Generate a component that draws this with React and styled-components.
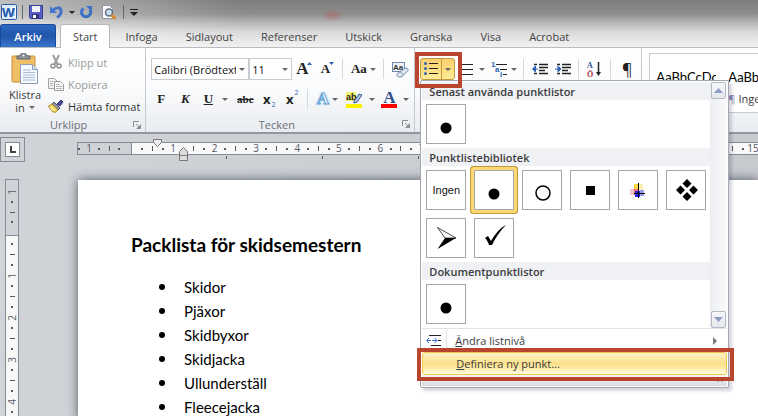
import React from "react";
import styled, { createGlobalStyle, css } from "styled-components";

const GlobalStyle = createGlobalStyle`
  * {
    box-sizing: border-box;
  }
  body {
    margin: 0;
    overflow: hidden;
    background: #c9cdd2;
    color: #3b3b3b;
    font-family: "Open Sans", "Noto Sans", sans-serif;
    font-size: 11px;
  }
  button,
  select {
    font: inherit;
    color: inherit;
  }
  svg {
    display: block;
    flex: none;
  }
`;

const tabs = ["Infoga", "Sidlayout", "Referenser", "Utskick", "Granska", "Visa", "Acrobat"];
const packlista = ["Skidor", "Pjäxor", "Skidbyxor", "Skidjacka", "Ullunderställ", "Fleecejacka"];

const Caret = ({ color = "#666" }) => (
  <svg width="6" height="3" viewBox="0 0 6 3">
    <path d="M0 0h6L3 3z" fill={color} />
  </svg>
);

const WordIcon = () => (
  <svg width="16" height="16" viewBox="0 0 16 16">
    <rect x="0.500" y="0.500" width="15" height="15" rx="1" fill="#dceafa" stroke="#2a5aa8" />
    <path d="M10 3h5v10h-5z" fill="#fff" />
    <path d="M11 5h3M11 7h3M11 9h3M11 11h3" stroke="#5a86c6" />
    <text x="1" y="13" fontSize="13" fontWeight="700" fontFamily="Open Sans" fill="#1c58ad">
      W
    </text>
  </svg>
);

const SaveIcon = () => (
  <svg width="14" height="14" viewBox="0 0 14 14">
    <path d="M0.500 0.500h13v13h-12l-1-1z" fill="#5a5cc4" stroke="#3c3d96" />
    <path d="M3 1h8v6H3z" fill="#eef2fb" />
    <path d="M3 9h7v5H3z" fill="#31327f" />
    <path d="M4 10h3v3H4z" fill="#fff" />
  </svg>
);

const UndoIcon = () => (
  <svg width="13" height="14" viewBox="0 0 13 14">
    <path d="M3 5.500C5 2.500 10.500 1.500 11 5.500c.3 3-1.500 5.500-4 7" fill="none" stroke="#3f74c8" strokeWidth="3" />
    <path d="M0 1v7h7z" fill="#3f78cf" />
  </svg>
);

const RedoIcon = () => (
  <svg width="13" height="13" viewBox="0 0 13 13">
    <path d="M3.500 2.500A4.500 4.500 0 1 0 10 4" fill="none" stroke="#3a70c6" strokeWidth="3" />
    <path d="M6 0h6v6z" fill="#3a70c6" />
  </svg>
);

const PreviewIcon = () => (
  <svg width="16" height="15" viewBox="0 0 16 15">
    <path d="M1.500 0.500h7l3 3v10h-10z" fill="#fff" stroke="#8b96a8" />
    <circle cx="8" cy="7.500" r="3.500" fill="#c9dff2" stroke="#5d6c80" strokeWidth="1.500" />
    <path d="M10.500 10l4 4" stroke="#d98a2b" strokeWidth="3" />
  </svg>
);

const PasteIcon = () => (
  <svg width="28" height="31" viewBox="0 0 28 31">
    <rect x="1" y="3" width="23" height="26" rx="1" fill="#efbe66" stroke="#c98f3a" />
    <path d="M6 6V3h3c0-4 7-4 7 0h3v3z" fill="#8c9196" stroke="#62676c" />
    <circle cx="12.500" cy="2.500" r="1" fill="#fff" />
    <path d="M9.500 11.500h12l5 5v14h-17z" fill="#f6f9fd" stroke="#8c9db5" />
    <path d="M21.500 11.500v5h5" fill="#d5e0ee" stroke="#8c9db5" />
    <path d="M12 17h8M12 19.500h12M12 22h12M12 24.500h12M12 27h12" stroke="#a9b9d0" />
  </svg>
);

const CutIcon = () => (
  <svg width="16" height="16" viewBox="0 0 16 16">
    <path d="M5 1l4.500 9M11 1L6.500 10" stroke="#9a9a9a" strokeWidth="2" />
    <circle cx="5" cy="12" r="2" fill="none" stroke="#8f8f8f" strokeWidth="1.500" />
    <circle cx="11" cy="12" r="2" fill="none" stroke="#8f8f8f" strokeWidth="1.500" />
  </svg>
);

const CopyIcon = () => (
  <svg width="16" height="14" viewBox="0 0 16 14">
    <path d="M0.500 1.500h6l3 3v7h-9z" fill="#f3f3f3" stroke="#a5a5a5" />
    <path d="M6.500 4.500h6l3 3v6h-9z" fill="#fafafa" stroke="#9a9a9a" />
    <path d="M2 4.500h3M2 6.500h3M2 8.500h3M8 7.500h4M8 9.500h6M8 11.500h6" stroke="#b5b5b5" />
  </svg>
);

const BrushIcon = () => (
  <svg width="16" height="14" viewBox="0 0 16 14">
    <path d="M9 5l4-4 2 2-3 4z" fill="#4c4f9e" stroke="#34376f" />
    <path d="M6 3l6 6-2 2-6-6z" fill="#8c93a8" stroke="#555b6e" />
    <path d="M4 5l6 6-3 2.500C4 13 2 10 0.500 7z" fill="#f5d65a" stroke="#a8862a" />
    <path d="M3 7l4 5M2 8l3 4" stroke="#fff3b0" />
  </svg>
);

const ClearIcon = () => (
  <svg width="17" height="17" viewBox="0 0 17 17">
    <rect x="0.500" y="1.500" width="12" height="9" fill="#f2f6fb" stroke="#6d8bb3" />
    <text x="1" y="9" fontSize="8" fontWeight="700" fontFamily="Liberation Sans" fill="#333">
      Aa
    </text>
    <path d="M5.500 12.500l7-5c2-1 4 0 3.500 2l-6.500 6.500h-3c-2-1-2-2-1-3.500z" fill="#dfe9f5" stroke="#6d86a8" />
    <path d="M8 11l4 3" stroke="#8ba3c2" />
  </svg>
);

const Bullets = () => (
  <svg width="14" height="14" viewBox="0 0 14 14">
    <path d="M5 1.500h9M5 6.500h9M5 11.500h9" stroke="#222" />
    <g fill="#2e62b5">
      <circle cx="1.500" cy="1.500" r="1.500" />
      <circle cx="1.500" cy="6.500" r="1.500" />
      <circle cx="1.500" cy="11.500" r="1.500" />
    </g>
  </svg>
);

const Numbering = () => (
  <svg width="14" height="14" viewBox="0 0 14 14">
    <path d="M3 2.500h11M3 7.500h11M3 12.500h11" stroke="#222" />
    <path d="M0.500 1v3M0.500 6v3M0.500 11v3" stroke="#2e62b5" />
  </svg>
);

const MultiLevel = () => (
  <svg width="17" height="17" viewBox="0 0 17 17">
    <path d="M5 3.500h11M9 8.500h7M12 13.500h4" stroke="#222" />
    <g fill="#2e62b5" fontSize="8" fontWeight="700" fontFamily="Liberation Sans">
      <text x="0" y="6">1</text>
      <text x="4" y="11">a</text>
      <text x="9" y="16">i</text>
    </g>
  </svg>
);

const IndentIcon = ({ right }) => (
  <svg width="16" height="13" viewBox="0 0 16 13">
    <path d="M2 1.500h3M7 1.500h9M7 4.500h9M7 7.500h6M2 10.500h3M7 10.500h9" stroke="#222" strokeWidth="1.500" />
    <path d={right ? "M0 6h3M3 3l3 3-3 3z" : "M3 6h3M3.500 3l-3 3 3 3z"} fill="#2e62b5" stroke="#2e62b5" />
  </svg>
);

const SortIcon = () => (
  <svg width="15" height="18" viewBox="0 0 15 18">
    <text x="0" y="8" fontSize="8" fontWeight="700" fontFamily="Liberation Serif" fill="#2e4f92">
      A
    </text>
    <text x="0" y="17" fontSize="8" fontWeight="700" fontFamily="Liberation Serif" fill="#9b2f35">
      Ö
    </text>
    <path d="M11.500 2v12" stroke="#222" strokeWidth="1.500" />
    <path d="M9 12h5l-2.500 4z" fill="#222" />
  </svg>
);

const LauncherIcon = () => (
  <svg width="8" height="8" viewBox="0 0 8 8">
    <path d="M0.500 6V0.500H6" fill="none" stroke="#8b9097" />
    <path d="M3 3l3 3" stroke="#8b9097" />
    <path d="M8 3v5H3z" fill="#8b9097" />
  </svg>
);

const ListLevelIcon = () => (
  <svg width="16" height="12" viewBox="0 0 16 12">
    <path d="M3 0.500h12M12 5.500h3M5 10.500h10" stroke="#222" />
    <path d="M1 5.500h4M6 5.500h5" stroke="#3d74d0" />
    <path d="M3 3L0.500 5.500 3 8M8.500 3L11 5.500 8.500 8" fill="none" stroke="#3d74d0" />
  </svg>
);

const Highlighter = () => (
  <svg width="17" height="17" viewBox="0 0 17 17">
    <path d="M0 1h10v9H0z" fill="#f4f06a" />
    <text x="0" y="9" fontSize="9" fontWeight="700" fontFamily="Liberation Sans" fill="#222">
      ab
    </text>
    <path d="M8 10l5-7 3 1-5 7-3 1z" fill="#a9c2e2" stroke="#3f5f8f" />
    <path d="M0 13h16v4H0z" fill="#fff200" />
  </svg>
);

const bulletGlyphs = {
  dot: <circle cx="19" cy="23" r="5.500" fill="#000" />,
  circle: <circle cx="20" cy="22" r="7" fill="none" stroke="#000" strokeWidth="1.500" />,
  square: <path d="M15 15h9v9h-9z" fill="#000" />,
  cross: (
    <>
      <path d="M15 13h5v6h-5z" fill="#f8d648" />
      <path d="M20 13h4v6h-4z" fill="#fcefb4" />
      <path d="M11 18h4v6h-4z" fill="#fac4c4" />
      <path d="M15 18h5v6h-5z" fill="#f56a6a" />
      <path d="M16 20h5v6h-5z" fill="#2222f0" />
      <path d="M21 19h4v6h-4z" fill="#9d9df8" />
      <path d="M19.500 12v15M15 22.500h11" stroke="#000" />
    </>
  ),
  diamonds: (
    <path
      d="M20 8l4.500 4.500L20 17l-4.500-4.500zM13.500 14.500L18 19l-4.500 4.500L9 19zM26.500 14.500L31 19l-4.500 4.500L22 19zM20 21l4.500 4.500L20 30l-4.500-4.500z"
      fill="#000"
    />
  ),
  arrow: (
    <>
      <path d="M10.500 8.500L29 19H18z" fill="#fff" stroke="#000" strokeWidth="0.700" />
      <path d="M18 19h11L10.500 30z" fill="#000" />
    </>
  ),
  check: <path d="M10 19l3-2 3 5C20 15 25 9 31 6c-6 6-10 12-14 20h-3c-1-3-2-5-4-7z" fill="#000" />,
};

const Glyph = ({ name }) => (
  <svg width="38" height="38" viewBox="0 0 38 38" role="img" aria-label={name}>
    {bulletGlyphs[name]}
  </svg>
);

const App = () => {
  const mapUnits = (count) =>
    Array.from({ length: count }, (_, index) => (
      <RulerUnit key={index}>
        <Dot />
        <Tick />
        <Dot />
        <RulerNumber>{index + 1}</RulerNumber>
      </RulerUnit>
    ));

  const mapVerticalUnits = (count) =>
    Array.from({ length: count }, (_, index) => (
      <VerticalUnit key={index}>
        <Dot />
        <Tick $vertical />
        <Dot />
        <VerticalNumber>{index + 1}</VerticalNumber>
      </VerticalUnit>
    ));

  return (
    <Window>
      <GlobalStyle />
      <Header>
        <QuickAccess>
          <WordIcon />
          <QuickLine />
          <QuickButton aria-label="Spara">
            <SaveIcon />
          </QuickButton>
          <QuickButton aria-label="Ångra">
            <UndoIcon />
            <Caret color="#222" />
          </QuickButton>
          <QuickButton aria-label="Gör om">
            <RedoIcon />
          </QuickButton>
          <QuickButton aria-label="Förhandsgranska">
            <PreviewIcon />
          </QuickButton>
          <QuickLine />
          <QuickButton aria-label="Anpassa">
            <svg width="8" height="7" viewBox="0 0 8 7">
              <path d="M0 0.500h8" stroke="#222" />
              <path d="M0 3h8L4 7z" fill="#222" />
            </svg>
          </QuickButton>
        </QuickAccess>
        <TabList>
          <FileTab>Arkiv</FileTab>
          <Tab $active>Start</Tab>
          {tabs.map((tab) => (
            <Tab key={tab}>{tab}</Tab>
          ))}
        </TabList>
      </Header>

      <Ribbon>
        <Group>
          <ClipboardBody>
            <PasteButton>
              <PasteIcon />
              <PasteText>
                Klistra
                <PasteLine>
                  in <Caret />
                </PasteLine>
              </PasteText>
            </PasteButton>
            <ClipboardList>
              <ClipboardButton disabled>
                <CutIcon />
                Klipp ut
              </ClipboardButton>
              <ClipboardButton disabled>
                <CopyIcon />
                Kopiera
              </ClipboardButton>
              <ClipboardButton>
                <BrushIcon />
                Hämta format
              </ClipboardButton>
            </ClipboardList>
          </ClipboardBody>
          <GroupFooter>
            <GroupName>Urklipp</GroupName>
            <LauncherIcon />
          </GroupFooter>
        </Group>

        <Group>
          <GroupBody>
            <ToolRow>
              <Combo $width={98}>
                <select aria-label="Teckensnitt">
                  <option>Calibri (Brödtext)</option>
                </select>
                <Caret />
              </Combo>
              <Combo $width={43}>
                <select aria-label="Teckenstorlek">
                  <option>11</option>
                </select>
                <Caret />
              </Combo>
              <Tool $width={24} $size={17} $serif aria-label="Öka teckenstorlek">
                A
                <SizeMark>
                  <path d="M0 3h5L2.500 0z" fill="#2e62b5" />
                </SizeMark>
              </Tool>
              <Tool $width={22} $size={13} $serif aria-label="Minska teckenstorlek">
                A
                <SizeMark>
                  <path d="M0 0h5L2.500 3z" fill="#2e62b5" />
                </SizeMark>
              </Tool>
              <Divider />
              <Tool $width={32} $size={13} $serif>
                Aa
                <Caret />
              </Tool>
              <Divider />
              <Tool $width={24} aria-label="Radera formatering">
                <ClearIcon />
              </Tool>
            </ToolRow>
            <ToolRow>
              <Tool $width={20} $size={13} $serif>
                F
              </Tool>
              <Tool $width={28} $size={13} $serif $italic>
                K
              </Tool>
              <Tool $width={18} $size={13} $serif>
                <u>U</u>
              </Tool>
              <Tool $width={16} aria-label="Understrykning">
                <Caret />
              </Tool>
              <Tool $width={24} $size={11} $serif>
                <s>abc</s>
              </Tool>
              <Tool $width={24} $gap={1} $size={13}>
                <b>x</b>
                <Sub>2</Sub>
              </Tool>
              <Tool $width={22} $gap={1} $size={13}>
                <b>x</b>
                <Sup>2</Sup>
              </Tool>
              <Divider />
              <Tool $width={30} $size={17} $serif>
                <GlowLetter>A</GlowLetter>
                <Caret />
              </Tool>
              <Tool $width={36} $gap={6} aria-label="Överstrykningsfärg">
                <Highlighter />
                <Caret />
              </Tool>
              <Tool $width={34} $gap={6} $size={17} $serif>
                <ColorLetter>A</ColorLetter>
                <Caret />
              </Tool>
            </ToolRow>
          </GroupBody>
          <GroupFooter>
            <GroupName>Tecken</GroupName>
            <LauncherIcon />
          </GroupFooter>
        </Group>

        <Group>
          <GroupBody>
            <ToolRow>
              <BulletPicker>
                <BulletButton aria-label="Punktlista">
                  <Bullets />
                </BulletButton>
                <BulletArrow aria-label="Välj punkt">
                  <Caret />
                </BulletArrow>
                <BulletMenu />
                <ButtonFrame />
              </BulletPicker>
              <Tool $width={34} $gap={6} aria-label="Numrering">
                <Numbering />
                <Caret />
              </Tool>
              <Tool $width={30} aria-label="Lista med flera nivåer">
                <MultiLevel />
                <Caret />
              </Tool>
              <Divider />
              <Tool $width={24} aria-label="Minska indrag">
                <IndentIcon />
              </Tool>
              <Tool $width={22} aria-label="Öka indrag">
                <IndentIcon right />
              </Tool>
              <Divider />
              <Tool $width={23} aria-label="Sortera">
                <SortIcon />
              </Tool>
              <Divider />
              <Tool $width={24} $size={16} aria-label="Visa alla">
                ¶
              </Tool>
            </ToolRow>
          </GroupBody>
        </Group>

        <StylesGroup>
          <StyleGallery>
            <StyleItem>
              <StyleSample>AaBbCcDc</StyleSample>
              <StyleName>¶ Normal</StyleName>
            </StyleItem>
            <StyleItem>
              <StyleSample>AaBbCcDc</StyleSample>
              <StyleName>
                <Pilcrow>¶</Pilcrow> Ingen avst...
              </StyleName>
            </StyleItem>
          </StyleGallery>
        </StylesGroup>
      </Ribbon>

      <Workspace>
        <SideColumn>
          <TabSelector aria-label="Tabb">
            <TabSelectorInner>
              <svg width="6" height="7" viewBox="0 0 6 7">
                <path d="M1 0v6h5" fill="none" stroke="#444" strokeWidth="2" />
              </svg>
            </TabSelectorInner>
          </TabSelector>
          <VerticalRuler>
            <VerticalMargin>
              <VerticalNumber>1</VerticalNumber>
              <Dot />
              <Tick $vertical />
              <Dot />
            </VerticalMargin>
            <VerticalScale>{mapVerticalUnits(5)}</VerticalScale>
          </VerticalRuler>
        </SideColumn>
        <DocumentColumn>
          <Ruler>
            <RulerMargin>
              <Dot />
              <RulerNumber>1</RulerNumber>
              <Dot />
              <Tick />
              <Dot />
            </RulerMargin>
            <RulerScale>{mapUnits(15)}</RulerScale>
            <IndentMarkers width="36" height="22" viewBox="0 0 36 22">
              <path d="M0.500 0.500h8v3l-4 4-4-4z" fill="#ececec" stroke="#777" />
              <path d="M26.500 12.500l4-4 4 4v9h-8z" fill="#dcdcdc" stroke="#777" />
              <path d="M26 16.500h9" stroke="#777" />
            </IndentMarkers>
          </Ruler>
          <TabStops>
            {[1, 2, 3, 4, 5, 6].map((stop) => (
              <TabStop key={stop} />
            ))}
          </TabStops>
          <Page>
            <Title>Packlista för skidsemestern</Title>
            <List>
              {packlista.map((item) => (
                <ListItem key={item}>{item}</ListItem>
              ))}
            </List>
          </Page>
        </DocumentColumn>
      </Workspace>
    </Window>
  );
};

const BulletMenu = () => (
  <Menu>
    <Gallery>
      <GalleryList>
        <GalleryHeader>Senast använda punktlistor</GalleryHeader>
        <GalleryGrid>
          <GalleryItem>
            <Glyph name="dot" />
          </GalleryItem>
        </GalleryGrid>
        <GalleryHeader>Punktlistebibliotek</GalleryHeader>
        <GalleryGrid>
          <GalleryItem>Ingen</GalleryItem>
          <GalleryItem $selected>
            <Glyph name="dot" />
          </GalleryItem>
          {["circle", "square", "cross", "diamonds", "arrow", "check"].map((name) => (
            <GalleryItem key={name}>
              <Glyph name={name} />
            </GalleryItem>
          ))}
        </GalleryGrid>
        <GalleryHeader>Dokumentpunktlistor</GalleryHeader>
        <GalleryGrid>
          <GalleryItem>
            <Glyph name="dot" />
          </GalleryItem>
        </GalleryGrid>
      </GalleryList>
      <ScrollBar>
        <ScrollButton aria-label="Uppåt">
          <svg width="9" height="5" viewBox="0 0 9 5">
            <path d="M0 5h9L4.500 0z" fill="#8f9cc4" />
          </svg>
        </ScrollButton>
        <ScrollButton aria-label="Nedåt">
          <svg width="9" height="5" viewBox="0 0 9 5">
            <path d="M0 0h9L4.500 5z" fill="#8f9cc4" />
          </svg>
        </ScrollButton>
      </ScrollBar>
    </Gallery>
    <MenuItem>
      <MenuIcon>
        <ListLevelIcon />
      </MenuIcon>
      <MenuText>
        <u>Ä</u>ndra listnivå
      </MenuText>
      <svg width="4" height="8" viewBox="0 0 4 8">
        <path d="M0 0v8l4-4z" fill="#777" />
      </svg>
    </MenuItem>
    <MenuItem $hot>
      <MenuIcon $hot />
      <MenuText>
        <u>D</u>efiniera ny punkt...
      </MenuText>
    </MenuItem>
    <MenuGrip>
      <svg width="7" height="3" viewBox="0 0 7 3">
        <path d="M0 0h2v2H0zM4 0h2v2H4z" fill="#b3b7bd" />
      </svg>
    </MenuGrip>
  </Menu>
);

const Window = styled.div`
  height: 100vh;
  display: flex;
  flex-direction: column;
  overflow: hidden;
`;

const Header = styled.header`
  display: flex;
  flex-direction: column;
  background: radial-gradient(ellipse 12px 7px at 333px 15px, rgba(190, 80, 80, 0.4), transparent),
    linear-gradient(to right, rgba(255, 255, 255, 0.5), transparent 240px),
    linear-gradient(#7c7c7c, #8e8e8e 14px, #b4b4b4 22px, #dadada 32px, #f2f2f2 47px);
`;

const QuickAccess = styled.div`
  height: 24px;
  padding: 0 1px;
  display: flex;
  align-items: center;
  gap: 3px;
`;

const QuickLine = styled.span`
  width: 1px;
  height: 14px;
  margin: 0 2px;
  background: #666;
`;

const plainButton = css`
  border: 0;
  padding: 0;
  background: none;
  display: flex;
  align-items: center;
`;

const QuickButton = styled.button`
  ${plainButton}
  min-width: 16px;
  gap: 6px;
  margin: 0 1px;
`;

const TabList = styled.nav`
  display: flex;
  height: 24px;
  border-bottom: 1px solid #b9bcc0;
`;

const Tab = styled.button`
  ${plainButton}
  height: 24px;
  padding: 0 14px;
  color: #444;
  ${({ $active }) =>
    $active &&
    css`
      padding: 0 12px;
      margin-right: 1px;
      background: #fff;
      border: 1px solid #b4b7bb;
      border-bottom: 0;
      border-radius: 3px 3px 0 0;
    `}
`;

const FileTab = styled.button`
  ${plainButton}
  justify-content: center;
  width: 56px;
  height: 23px;
  margin-right: 4px;
  border: 1px solid #1d4a97;
  border-bottom: 0;
  border-radius: 3px 3px 0 0;
  background: linear-gradient(#2f68c0, #1f55ab 50%, #3a76cc);
  color: #fff;
  font-weight: 600;
`;

const Ribbon = styled.div`
  display: flex;
  position: relative;
  z-index: 1;
  height: 86px;
  background: linear-gradient(#fff, #fafbfc 50%, #e8ebf0);
  border-bottom: 2px solid #92979e;
`;

const Group = styled.section`
  display: flex;
  flex-direction: column;
  justify-content: space-between;
  border-right: 1px solid #c6cad0;
  margin-right: 1px;
`;

const GroupFooter = styled.div`
  display: flex;
  align-items: center;
  height: 16px;
  padding: 0 4px;
`;

const GroupName = styled.span`
  flex: 1;
  text-align: center;
  color: #6a6f77;
`;

const GroupBody = styled.div`
  display: flex;
  flex-direction: column;
  gap: 8px;
  padding: 10px 2px 0 4px;
`;

const ClipboardBody = styled.div`
  display: flex;
  padding: 3px 3px 0 4px;
`;

const PasteButton = styled.button`
  ${plainButton}
  flex-direction: column;
  width: 42px;
  padding-top: 2px;
  gap: 4px;
`;

const PasteText = styled.span`
  display: flex;
  flex-direction: column;
  align-items: center;
  line-height: 13px;
`;

const PasteLine = styled.span`
  display: flex;
  align-items: center;
  gap: 4px;
`;

const ClipboardList = styled.div`
  display: flex;
  flex-direction: column;
`;

const ClipboardButton = styled.button`
  ${plainButton}
  height: 22px;
  gap: 4px;
  padding: 0 2px;
  white-space: nowrap;
  color: ${({ disabled }) => (disabled ? "#9b9b9b" : "#333")};
`;

const ToolRow = styled.div`
  display: flex;
  align-items: center;
  height: 22px;
`;

const Combo = styled.label`
  display: grid;
  grid-template-columns: 1fr 12px;
  align-items: center;
  width: ${({ $width }) => $width}px;
  height: 22px;
  border: 1px solid #c9ccd1;
  background: #fff;
  color: #111;
  select {
    grid-area: 1 / 1;
    appearance: none;
    width: 100%;
    border: 0;
    padding: 0 0 0 2px;
    background: none;
    overflow: hidden;
  }
  svg {
    grid-area: 1 / 2;
    justify-self: center;
  }
`;

const Tool = styled.button`
  ${plainButton}
  justify-content: center;
  gap: ${({ $gap = 3 }) => $gap}px;
  width: ${({ $width }) => $width}px;
  height: 22px;
  color: #222;
  font-size: ${({ $size = 11 }) => $size}px;
  line-height: 20px;
  ${({ $serif }) =>
    $serif &&
    css`
      font-family: "Liberation Serif", serif;
      font-weight: 700;
    `}
  font-style: ${({ $italic }) => ($italic ? "italic" : "normal")};
`;

const SizeMark = styled.svg.attrs({ width: 5, height: 3, viewBox: "0 0 5 3" })`
  align-self: flex-start;
  margin: 4px 0 0 -4px;
`;

const Sub = styled.sub`
  align-self: flex-end;
  color: #2e62b5;
  font-size: 7px;
  line-height: 10px;
`;

const Sup = styled(Sub).attrs({ as: "sup" })`
  align-self: flex-start;
`;

const GlowLetter = styled.span`
  color: #fff;
  -webkit-text-stroke: 1px #6ba6d8;
  text-shadow: 0 0 3px #6fb3ea;
`;

const ColorLetter = styled.span`
  width: 16px;
  height: 17px;
  line-height: 13px;
  border-bottom: 4px solid #f00;
  color: #2e4f92;
`;

const Divider = styled.span`
  width: 1px;
  height: 20px;
  margin: 0 4px;
  background: #d5d8dd;
`;

const BulletPicker = styled.div`
  position: relative;
  display: flex;
  height: 22px;
  border: 1px solid #c29a3c;
  border-radius: 3px;
  background: linear-gradient(#fbd070, #fddd82 50%, #fdeb98);
`;

const BulletButton = styled.button`
  ${plainButton}
  justify-content: center;
  width: 20px;
`;

const BulletArrow = styled.button`
  ${plainButton}
  justify-content: center;
  width: 13px;
  border-left: 1px solid #c29a3c;
`;

const frame = css`
  position: absolute;
  border: 4px solid #b9452f;
  pointer-events: none;
`;

const ButtonFrame = styled.span`
  ${frame}
  inset: -7px -8px -9px -6px;
`;

const Menu = styled.div`
  position: absolute;
  top: 21px;
  left: -1px;
  width: 309px;
  padding: 1px;
  border: 1px solid #a3a8af;
  border-radius: 2px;
  background: #fff;
  box-shadow: 3px 3px 3px rgba(60, 50, 90, 0.2);
`;

const Gallery = styled.div`
  display: flex;
  border-bottom: 1px solid #dfe2e6;
`;

const GalleryList = styled.div`
  flex: 1;
`;

const GalleryHeader = styled.div`
  height: 18px;
  padding: 0 7px;
  line-height: 19px;
  background: #eff1f5;
  font-weight: 600;
`;

const GalleryGrid = styled.div`
  display: flex;
  flex-wrap: wrap;
  gap: 8px;
  padding: 4px;
`;

const GalleryItem = styled.button`
  ${plainButton}
  justify-content: center;
  width: 40px;
  height: 40px;
  border: 1px solid #a6a6a6;
  background: #fff;
  color: #111;
  font-family: "Liberation Sans", sans-serif;
  font-size: 11px;
  ${({ $selected }) =>
    $selected &&
    css`
      box-shadow: 0 0 0 3px #fdd873, 0 0 0 4px #c29a3c;
      border-radius: 1px;
    `}
`;

const ScrollBar = styled.div`
  display: flex;
  flex-direction: column;
  justify-content: space-between;
  width: 17px;
  padding: 0 1px;
  background: linear-gradient(to right, #eceef1, #fafafb);
`;

const ScrollButton = styled.button`
  ${plainButton}
  justify-content: center;
  height: 17px;
  border: 1px solid #b3b9c4;
  border-radius: 2px;
  background: linear-gradient(#f7f8fa, #e4e7ec);
`;

const MenuItem = styled.button`
  ${plainButton}
  position: relative;
  width: 100%;
  height: 23px;
  padding-right: 10px;
  text-align: left;
  ${({ $hot }) =>
    $hot &&
    css`
      border: 1px solid #f0c64b;
      border-radius: 3px;
      background: linear-gradient(#fdf3cb, #fde08a 50%, #fdeaa5 70%, #fffbe2);
      &::after {
        content: "";
        ${frame}
        inset: -5px -8px -7px -6px;
      }
    `}
`;

const MenuIcon = styled.span`
  display: flex;
  align-items: center;
  justify-content: center;
  align-self: stretch;
  width: 25px;
  margin-right: 8px;
  border-right: 1px solid ${({ $hot }) => ($hot ? "transparent" : "#dfe2e6")};
`;

const MenuText = styled.span`
  flex: 1;
`;

const MenuGrip = styled.div`
  display: flex;
  align-items: flex-end;
  justify-content: flex-end;
  height: 11px;
  padding: 3px;
  background: linear-gradient(#f3f5f7, #d9dde2);
`;

const StylesGroup = styled.section`
  flex: 1;
  min-width: 0;
  padding: 5px 0 0 6px;
`;

const StyleGallery = styled.div`
  display: flex;
  height: 60px;
  border: 1px solid #c6cad0;
  border-right: 0;
  background: #fff;
  overflow: hidden;
`;

const StyleItem = styled.button`
  ${plainButton}
  flex: none;
  flex-direction: column;
  align-items: flex-start;
  width: 72px;
  padding: 13px 6px 0;
  overflow: hidden;
  white-space: nowrap;
`;

const StyleSample = styled.span`
  width: 100%;
  overflow: hidden;
  color: #000;
  font-family: Lato, sans-serif;
  font-size: 13px;
  line-height: 20px;
  text-align: left;
`;

const StyleName = styled.span`
  line-height: 24px;
`;

const Pilcrow = styled.span`
  color: #8b8bb8;
`;

const Workspace = styled.main`
  flex: 1;
  display: flex;
  min-height: 0;
  background: linear-gradient(to right, #d0d4d9, #c6c9ce);
`;

const SideColumn = styled.div`
  display: flex;
  flex-direction: column;
  width: 77px;
  padding-top: 3px;
`;

const TabSelector = styled.button`
  ${plainButton}
  justify-content: center;
  width: 25px;
  height: 25px;
  flex: none;
  border: 1px solid #858b92;
`;

const TabSelectorInner = styled.span`
  display: flex;
  align-items: center;
  justify-content: center;
  width: 15px;
  height: 15px;
  border: 1px solid #858b92;
  background: #fff;
`;

const VerticalRuler = styled.div`
  flex: 1;
  display: flex;
  flex-direction: column;
  min-height: 0;
  overflow: hidden;
  width: 14px;
  margin: 17px 0 0 5px;
  border: 1px solid #858b92;
  border-bottom: 0;
  color: #555a66;
  font-size: 10px;
`;

const VerticalMargin = styled.div`
  display: grid;
  grid-auto-rows: 10px;
  place-items: center;
  height: 56px;
  flex: none;
  padding: 7px 0;
  border-bottom: 1px solid #858b92;
`;

const VerticalScale = styled.div`
  padding-top: 3px;
  background: #f8f8f9;
`;

const VerticalUnit = styled.div`
  display: grid;
  grid-template-rows: repeat(4, 1fr);
  place-items: center;
  height: 42px;
`;

const VerticalNumber = styled.span`
  writing-mode: vertical-rl;
  transform: rotate(180deg);
  line-height: 12px;
`;

const Dot = styled.span`
  width: 2px;
  height: 2px;
  background: #555a60;
`;

const Tick = styled.span`
  width: ${({ $vertical }) => ($vertical ? 5 : 1)}px;
  height: ${({ $vertical }) => ($vertical ? 1 : 5)}px;
  background: #555a60;
`;

const DocumentColumn = styled.div`
  flex: 1;
  display: flex;
  flex-direction: column;
  min-width: 0;
  padding-top: 8px;
`;

const Ruler = styled.div`
  position: relative;
  flex: none;
  display: flex;
  height: 13px;
  border: 1px solid #858b92;
  border-right: 0;
  color: #555a66;
  font-size: 10px;
  line-height: 11px;
`;

const RulerMargin = styled.div`
  display: grid;
  grid-auto-flow: column;
  grid-auto-columns: 10px;
  place-items: center;
  flex: none;
  width: 58px;
  margin-left: -4px;
  border-right: 1px solid #858b92;
`;

const RulerScale = styled.div`
  flex: 1;
  display: flex;
  overflow: hidden;
  padding-left: 5px;
  background: #f8f8f9;
`;

const RulerUnit = styled.div`
  flex: 1;
  min-width: 0;
  display: grid;
  grid-template-columns: repeat(4, minmax(0, 1fr));
  place-items: center;
`;

const RulerNumber = styled.span`
  justify-self: center;
`;

const IndentMarkers = styled.svg`
  position: absolute;
  top: -4px;
  left: 75px;
`;

const TabStops = styled.div`
  flex: none;
  display: flex;
  height: 25px;
  padding: 1px 0 0 149px;
  overflow: hidden;
`;

const TabStop = styled.span`
  flex: none;
  width: 96px;
  height: 3px;
  border-left: 1px solid #555a60;
`;

const Page = styled.article`
  flex: 1;
  margin-left: 1px;
  padding: 53px 53px 0;
  background: #fff;
  box-shadow: 0 0 10px rgba(50, 55, 65, 0.8);
  color: #000;
  font-family: Lato, "Open Sans", sans-serif;
  clip-path: inset(-12px 0 0 -12px);
`;

const Title = styled.h1`
  margin: 0 0 18px;
  font-size: 19px;
  line-height: 24px;
`;

const List = styled.ul`
  margin: 0;
  padding: 0;
  list-style: none;
`;

const ListItem = styled.li`
  display: flex;
  align-items: center;
  gap: 19px;
  padding-left: 28px;
  font-size: 15px;
  line-height: 24px;
  &::before {
    content: "";
    width: 6px;
    height: 6px;
    border-radius: 50%;
    background: #000;
  }
`;

export default App;
